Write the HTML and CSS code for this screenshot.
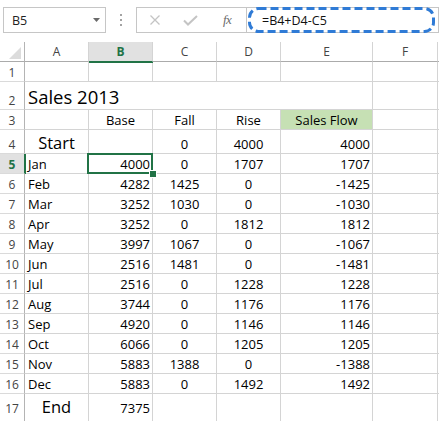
FILE: index.html
```html
<!DOCTYPE html>
<html>
<head>
<meta charset="utf-8">
<link rel="stylesheet" href="styles.css">
</head>
<body>
<div class="fbar">
  <div class="namebox"><span>B5</span><svg class="caret" width="7" height="4" viewBox="0 0 7 4"><path d="M0 0H7L3.5 4Z" fill="#6a6a6a"/></svg></div>
  <div class="grip"><i></i><i></i><i></i></div>
  <div class="fbtns">
    <svg class="xicon" width="10" height="10" viewBox="0 0 10 10"><path d="M0.5 0.5L9.5 9.5M9.5 0.5L0.5 9.5" stroke="#c4c4c4" stroke-width="1.3" fill="none"/></svg>
    <svg class="okicon" width="15" height="11" viewBox="0 0 15 11"><path d="M1 5.5L5 9.5L14 1" stroke="#c4c4c4" stroke-width="2" fill="none"/></svg>
    <span class="fx">fx</span>
  </div>
  <div class="finput"><span>=B4+D4-C5</span>
    <svg class="marquee" width="188" height="26" viewBox="0 0 188 26"><rect x="1.5" y="1.5" width="184" height="23" rx="9" ry="9" fill="none" stroke="#2f7bd6" stroke-width="3" stroke-dasharray="8 4"/></svg>
  </div>
</div>

<div class="sheet">
  <div class="row hdr">
    <div class="corner"><svg width="12" height="12" viewBox="0 0 12 12"><path d="M12 0V12H0Z" fill="#dcdcdc"/></svg></div>
    <div class="ch">A</div><div class="ch sel">B</div><div class="ch">C</div><div class="ch">D</div><div class="ch">E</div><div class="ch">F</div><div class="ch last"></div>
  </div>

  <div class="row">
    <div class="rh">1</div><div class="c"></div><div class="c"></div><div class="c"></div><div class="c"></div><div class="c"></div><div class="c"></div><div class="c last"></div>
  </div>

  <div class="row h28">
    <div class="rh">2</div><div class="c title span5">Sales 2013</div><div class="c"></div><div class="c last"></div>
  </div>

  <div class="row">
    <div class="rh">3</div><div class="c"></div><div class="c m">Base</div><div class="c m">Fall</div><div class="c m">Rise</div><div class="c m green">Sales Flow</div><div class="c"></div><div class="c last"></div>
  </div>

  <div class="row h24">
    <div class="rh">4</div><div class="c m big">Start</div><div class="c"></div><div class="c m">0</div><div class="c m">4000</div><div class="c r">4000</div><div class="c"></div><div class="c last"></div>
  </div>

  <div class="row">
    <div class="rh active">5</div><div class="c">Jan</div><div class="c r selected">4000<b class="handle"></b></div><div class="c m">0</div><div class="c m">1707</div><div class="c r">1707</div><div class="c"></div><div class="c last"></div>
  </div>
  <div class="row">
    <div class="rh">6</div><div class="c">Feb</div><div class="c r">4282</div><div class="c m">1425</div><div class="c m">0</div><div class="c r">-1425</div><div class="c"></div><div class="c last"></div>
  </div>
  <div class="row">
    <div class="rh">7</div><div class="c">Mar</div><div class="c r">3252</div><div class="c m">1030</div><div class="c m">0</div><div class="c r">-1030</div><div class="c"></div><div class="c last"></div>
  </div>
  <div class="row">
    <div class="rh">8</div><div class="c">Apr</div><div class="c r">3252</div><div class="c m">0</div><div class="c m">1812</div><div class="c r">1812</div><div class="c"></div><div class="c last"></div>
  </div>
  <div class="row">
    <div class="rh">9</div><div class="c">May</div><div class="c r">3997</div><div class="c m">1067</div><div class="c m">0</div><div class="c r">-1067</div><div class="c"></div><div class="c last"></div>
  </div>
  <div class="row">
    <div class="rh">10</div><div class="c">Jun</div><div class="c r">2516</div><div class="c m">1481</div><div class="c m">0</div><div class="c r">-1481</div><div class="c"></div><div class="c last"></div>
  </div>
  <div class="row">
    <div class="rh">11</div><div class="c">Jul</div><div class="c r">2516</div><div class="c m">0</div><div class="c m">1228</div><div class="c r">1228</div><div class="c"></div><div class="c last"></div>
  </div>
  <div class="row">
    <div class="rh">12</div><div class="c">Aug</div><div class="c r">3744</div><div class="c m">0</div><div class="c m">1176</div><div class="c r">1176</div><div class="c"></div><div class="c last"></div>
  </div>
  <div class="row">
    <div class="rh">13</div><div class="c">Sep</div><div class="c r">4920</div><div class="c m">0</div><div class="c m">1146</div><div class="c r">1146</div><div class="c"></div><div class="c last"></div>
  </div>
  <div class="row">
    <div class="rh">14</div><div class="c">Oct</div><div class="c r">6066</div><div class="c m">0</div><div class="c m">1205</div><div class="c r">1205</div><div class="c"></div><div class="c last"></div>
  </div>
  <div class="row">
    <div class="rh">15</div><div class="c">Nov</div><div class="c r">5883</div><div class="c m">1388</div><div class="c m">0</div><div class="c r">-1388</div><div class="c"></div><div class="c last"></div>
  </div>
  <div class="row">
    <div class="rh">16</div><div class="c">Dec</div><div class="c r">5883</div><div class="c m">0</div><div class="c m">1492</div><div class="c r">1492</div><div class="c"></div><div class="c last"></div>
  </div>
  <div class="row h28 tail">
    <div class="rh">17</div><div class="c m big">End</div><div class="c r">7375</div><div class="c"></div><div class="c"></div><div class="c"></div><div class="c"></div><div class="c last"></div>
  </div>
</div>
</body>
</html>
```

FILE: styles.css
```css
* { box-sizing: border-box; }
html, body { margin: 0; padding: 0; }
body {
  font-family: "Open Sans", "Noto Sans", sans-serif;
  background: #fff;
  color: #000;
  width: 439px;
  height: 421px;
  overflow: hidden;
}

/* formula bar */
.fbar {
  display: flex;
  align-items: flex-start;
  height: 42px;
  padding: 7px 0 0 3px;
}
.namebox {
  width: 103px;
  height: 26px;
  border: 1px solid #c6c6c6;
  display: flex;
  align-items: center;
  padding-left: 8px;
  font-size: 12.5px;
  color: #222;
}
.namebox .caret { margin-left: auto; margin-right: 5px; }
.grip {
  width: 30px;
  height: 26px;
  display: flex;
  flex-direction: column;
  align-items: center;
  justify-content: center;
  gap: 3px;
}
.grip i {
  display: block;
  width: 2px;
  height: 2px;
  background: #a3a3a3;
}
.fbtns {
  width: 111px;
  height: 26px;
  border: 1px solid #c6c6c6;
  display: flex;
  align-items: center;
}
.fbtns .xicon { margin-left: 13px; }
.fbtns .okicon { margin-left: 23px; }
.fbtns .fx {
  margin-left: 25px;
  font-family: "Liberation Serif", "DejaVu Serif", serif;
  font-style: italic;
  font-size: 13px;
  color: #6b6b6b;
  letter-spacing: -0.5px;
}
.finput {
  flex: 1;
  height: 26px;
  border: 1px solid #c6c6c6;
  border-left: none;
  position: relative;
  display: flex;
  align-items: center;
  padding-left: 15px;
  font-size: 12.5px;
  color: #111;
}
.marquee {
  position: absolute;
  left: 1px;
  top: -1px;
}

/* sheet */
.sheet { width: 439px; }
.row {
  display: grid;
  grid-template-columns: 25px 64px 64px 64px 64px 92px 65px 1fr;
  height: 20px;
}
.row.h28 { height: 28px; }
.row.h24 { height: 24px; }

.c {
  border-right: 1px solid #d4d4d4;
  border-bottom: 1px solid #d4d4d4;
  display: flex;
  align-items: flex-end;
  font-size: 13px;
  line-height: 17px;
  white-space: nowrap;
  padding: 0 3px;
  position: relative;
}
.c.last { border-right: none; }
.c.r { justify-content: flex-end; padding-right: 2px; }
.c.m { justify-content: center; padding: 0; }
.c.green { background: #c6e0b4; }
.c.big { font-size: 16.5px; line-height: 20px; }
.c.title {
  font-size: 18.5px;
  line-height: 22px;
  padding-bottom: 1px;
}
.span5 { grid-column: span 5; }

.tail .c, .tail .rh { padding-bottom: 4px; }

.rh {
  border-right: 1px solid #b4b4b4;
  border-bottom: 1px solid #dadada;
  display: flex;
  align-items: flex-end;
  justify-content: center;
  font-size: 12px;
  line-height: 17px;
  color: #444;
}
.rh.active {
  background: #e1e1e1;
  color: #217346;
  font-weight: bold;
  border-right: 1px solid #217346;
  box-shadow: 1px 0 0 #217346;
  position: relative;
  z-index: 1;
}

.hdr .ch {
  border-right: 1px solid #d4d4d4;
  border-bottom: 1px solid #ababab;
  display: flex;
  align-items: flex-end;
  justify-content: center;
  font-size: 12px;
  line-height: 16px;
  padding-bottom: 1px;
  color: #444;
}
.hdr .ch.last { border-right: none; }
.hdr .ch.sel {
  background: #e1e1e1;
  color: #217346;
  font-weight: bold;
  border-bottom-color: #217346;
  box-shadow: 0 1px 0 #217346;
  position: relative;
  z-index: 1;
}
.corner {
  border-right: 1px solid #b4b4b4;
  border-bottom: 1px solid #ababab;
  display: flex;
  align-items: flex-end;
  justify-content: flex-end;
  padding: 0 3px 2px 0;
}

.selected::after {
  content: "";
  position: absolute;
  top: -1px;
  left: -2px;
  right: -1px;
  bottom: -1px;
  border: 2px solid #217346;
  pointer-events: none;
}
.handle {
  position: absolute;
  right: -4px;
  bottom: -4px;
  width: 6px;
  height: 6px;
  background: #217346;
  outline: 1px solid #fff;
  z-index: 2;
}
```
